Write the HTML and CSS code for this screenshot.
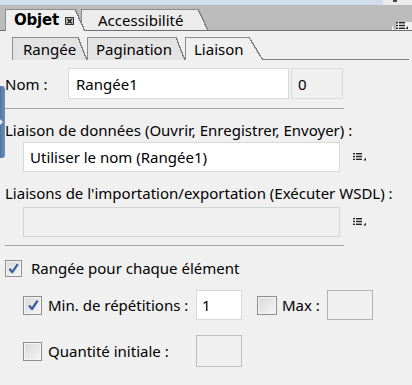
FILE: index.html
```html
<!DOCTYPE html>
<html lang="fr">
<head>
<meta charset="utf-8">
<title>Objet - Liaison</title>
<link rel="stylesheet" href="styles.css">
</head>
<body>
<div class="top-strip"><div class="top-blue"></div><div class="top-grip"></div></div>
<div class="tabbar">
  <div class="tab tab-active">
    <div class="tab-body objet-body"><span class="tab-title-bold">Objet</span><span class="close-box">×</span></div>
    <div class="tab-slant"></div>
  </div>
  <div class="tab tab-inactive">
    <div class="tab-body acc-body">Accessibilité</div>
    <div class="tab-slant"></div>
  </div>
  <div class="tabbar-fill"></div>
  <div class="panel-menu">
    <svg width="12" height="7" viewBox="0 0 12 7"><rect x="0" y="0" width="2" height="1.4" fill="#222"/><rect x="3" y="0" width="6" height="1.4" fill="#222"/><rect x="0" y="2.8" width="2" height="1.4" fill="#222"/><rect x="3" y="2.8" width="6" height="1.4" fill="#222"/><rect x="0" y="5.6" width="2" height="1.4" fill="#222"/><rect x="3" y="5.6" width="6" height="1.4" fill="#222"/><polygon points="12,4 12,7 9.5,7" fill="#222"/></svg>
  </div>
</div>
<div class="panel">
  <div class="subtabs">
    <div class="stab stab-inactive">
      <div class="stab-body rangee-body">Rangée</div>
      <div class="stab-slant"></div>
    </div>
    <div class="stab stab-inactive">
      <div class="stab-body pag-body">Pagination</div>
      <div class="stab-slant"></div>
    </div>
    <div class="stab stab-active">
      <div class="stab-body liaison-body">Liaison</div>
      <div class="stab-slant wide"></div>
    </div>
    <div class="subtabs-fill"></div>
  </div>

  <div class="row-nom">
    <span class="lbl-nom">Nom :</span>
    <div class="field field-nom">Rangée1</div>
    <div class="field field-count">0</div>
  </div>
  <div class="sep"></div>

  <div class="lbl-block lbl-first">Liaison de données (Ouvrir, Enregistrer, Envoyer) :</div>
  <div class="bind-row">
    <div class="field field-bind">Utiliser le nom (Rangée1)</div>
    <span class="list-icon"><svg width="14" height="8" viewBox="0 0 14 8"><rect x="0" y="0" width="2" height="1.4" fill="#222"/><rect x="3" y="0" width="6" height="1.4" fill="#222"/><rect x="0" y="2.8" width="2" height="1.4" fill="#222"/><rect x="3" y="2.8" width="6" height="1.4" fill="#222"/><rect x="0" y="5.6" width="2" height="1.4" fill="#222"/><rect x="3" y="5.6" width="6" height="1.4" fill="#222"/><polygon points="13,4.5 13,7.4 10.5,7.4" fill="#222"/></svg></span>
  </div>
  <div class="lbl-block lbl-second">Liaisons de l'importation/exportation (Exécuter WSDL) :</div>
  <div class="bind-row bind-row-2">
    <div class="field field-bind field-disabled"></div>
    <span class="list-icon"><svg width="14" height="8" viewBox="0 0 14 8"><rect x="0" y="0" width="2" height="1.4" fill="#222"/><rect x="3" y="0" width="6" height="1.4" fill="#222"/><rect x="0" y="2.8" width="2" height="1.4" fill="#222"/><rect x="3" y="2.8" width="6" height="1.4" fill="#222"/><rect x="0" y="5.6" width="2" height="1.4" fill="#222"/><rect x="3" y="5.6" width="6" height="1.4" fill="#222"/><polygon points="13,4.5 13,7.4 10.5,7.4" fill="#222"/></svg></span>
  </div>
  <div class="sep sep-2"></div>

  <div class="check-main">
    <span class="cb cb-small cb-checked"><svg width="13" height="13" viewBox="0 0 13 13"><path d="M2.5 6.8 L5.3 10.2 L10.8 2.2" fill="none" stroke="#3d5c9e" stroke-width="2.2" stroke-linejoin="round"/></svg></span>
    <span class="cb-label">Rangée pour chaque élément</span>
  </div>

  <div class="opt-row opt-row-1">
    <span class="cb cb-checked"><svg width="14" height="14" viewBox="0 0 14 14"><path d="M3 7.4 L6 11 L11.6 2.6" fill="none" stroke="#3d5c9e" stroke-width="2.3" stroke-linejoin="round"/></svg></span>
    <span class="opt-label">Min. de répétitions :</span>
    <div class="field field-small">1</div>
    <span class="cb cb-max"></span>
    <span class="opt-label opt-label-max">Max :</span>
    <div class="field field-small field-disabled field-dark"></div>
  </div>

  <div class="opt-row opt-row-2">
    <span class="cb"></span>
    <span class="opt-label">Quantité initiale :</span>
    <div class="field field-small field-disabled field-tall"></div>
  </div>
</div>
<div class="side-tab"><svg width="4" height="8" viewBox="0 0 4 8"><path d="M0 1 L3 4 L0 7 Z" fill="#e8eef5"/></svg></div>
</body>
</html>
```
FILE: styles.css
```css
html, body {
  margin: 0;
  padding: 0;
}
body {
  width: 412px;
  height: 385px;
  overflow: hidden;
  background: #f0f0f0;
  font-family: "Noto Sans", "Open Sans", sans-serif;
  font-size: 15px;
  color: #000;
  position: relative;
}

/* top strip */
.top-strip {
  display: flex;
  height: 5px;
  background: #ececec;
}
.top-blue {
  width: 383px;
  background: #d0dfeb;
}
.top-grip {
  width: 4px;
  height: 2px;
  margin-left: 10px;
  background: #444;
}

/* main tab bar */
.tabbar {
  display: flex;
  align-items: flex-end;
  height: 25px;
  padding-left: 5px;
  background: #bbbbbb;
  border-bottom: 1px solid #6e6e6e;
}
.tab {
  display: flex;
  height: 21px;
  position: relative;
}
.tab-active {
  z-index: 2;
  margin-bottom: -1px;
  height: 22px;
}
.tab-inactive {
  margin-left: -4px;
  z-index: 1;
}
.tab-body {
  display: flex;
  align-items: center;
  background: #f0f0f0;
  border-top: 1px solid #8c8c8c;
  border-left: 1px solid #8c8c8c;
}
.objet-body {
  width: 61px;
  padding-left: 8px;
  padding-bottom: 1px;
  box-sizing: content-box;
}
.acc-body {
  width: 100px;
  padding-left: 16px;
  background: #ececec;
}
.tab-title-bold {
  font-family: "DejaVu Sans", sans-serif;
  font-weight: bold;
  font-size: 15px;
  letter-spacing: -0.2px;
}
.close-box {
  flex: none;
  display: inline-flex;
  align-items: center;
  justify-content: center;
  width: 7px;
  height: 6px;
  margin-left: 6px;
  margin-top: 1px;
  border: 1px solid #333;
  background: #bdbdbd;
  font-size: 9px;
  line-height: 6px;
  font-weight: bold;
  font-family: "DejaVu Sans", sans-serif;
}
.tab-slant {
  width: 10px;
  background: linear-gradient(to top right, #f0f0f0 calc(50% - 0.8px), #7d7d7d calc(50% - 0.8px), #7d7d7d calc(50% + 0.5px), transparent calc(50% + 0.5px));
}
.tab-inactive .tab-slant {
  background: linear-gradient(to top right, #ececec calc(50% - 0.8px), #7d7d7d calc(50% - 0.8px), #7d7d7d calc(50% + 0.5px), transparent calc(50% + 0.5px));
}
.tabbar-fill {
  flex: 1;
}
.panel-menu {
  display: flex;
  align-items: center;
  justify-content: flex-end;
  width: 16px;
  height: 7px;
  padding: 0 4px 1px 0;
  background: linear-gradient(to top right, #f0f0f0 0 30%, transparent 30%) left / 4px 100% no-repeat, linear-gradient(#f0f0f0, #f0f0f0) 4px 0 / 100% 100% no-repeat;
}

/* panel */
.panel {
  padding: 6px 0 0 5px;
}
.subtabs {
  display: flex;
  height: 23px;
  padding-left: 7px;
}
.stab {
  display: flex;
  height: 23px;
}
.stab-body {
  display: flex;
  align-items: center;
  background: #e3e3e3;
  border-top: 1px solid #8c8c8c;
  border-left: 1px solid #8c8c8c;
  box-sizing: border-box;
}
.stab-active .stab-body {
  background: #f0f0f0;
}
.rangee-body {
  width: 66px;
  padding-left: 10px;
}
.pag-body {
  width: 89px;
  padding-left: 8px;
}
.liaison-body {
  width: 64px;
  padding-left: 8px;
}
.stab-slant {
  width: 9px;
  background: linear-gradient(to top right, #e3e3e3 calc(50% - 0.8px), #7d7d7d calc(50% - 0.8px), #7d7d7d calc(50% + 0.5px), transparent calc(50% + 0.5px));
}
.stab-slant.wide {
  width: 14px;
  background: linear-gradient(to top right, #f0f0f0 calc(50% - 0.8px), #7d7d7d calc(50% - 0.8px), #7d7d7d calc(50% + 0.5px), transparent calc(50% + 0.5px));
}
.subtabs-fill {
  flex: 1;
  margin-right: 3px;
  border-bottom: 1px solid #7d7d7d;
}

/* nom row */
.row-nom {
  display: flex;
  align-items: center;
  margin-top: 8px;
  height: 31px;
}
.lbl-nom {
  width: 63px;
}
.field {
  box-sizing: border-box;
  height: 31px;
  border: 1px solid #d9d9d9;
  background: #fff;
  display: flex;
  align-items: center;
  padding-left: 6px;
}
.field-nom {
  width: 221px;
  padding-left: 7px;
}
.field-count {
  width: 52px;
  margin-left: 2px;
  background: #f0f0f0;
  border-color: #dcdcdc;
}
.sep {
  width: 339px;
  height: 1px;
  background: #a4a4a4;
  margin-top: 9px;
}
.sep-2 {
  margin-top: 8px;
}

.lbl-block {
  height: 20px;
  line-height: 20px;
}
.lbl-first {
  margin-top: 11px;
}
.lbl-second {
  margin-top: 11px;
}
.bind-row {
  display: flex;
  align-items: center;
  margin-top: 2px;
  margin-left: 18px;
}
.bind-row-2 {
  margin-top: 4px;
}
.field-bind {
  width: 317px;
  height: 30px;
}
.field-disabled {
  background: #f0f0f0;
  border-color: #d4d4d4;
}
.list-icon {
  display: flex;
  margin-left: 13px;
  margin-top: -1px;
}

/* checkboxes */
.check-main {
  display: flex;
  align-items: center;
  margin-top: 13px;
  height: 18px;
}
.cb {
  box-sizing: border-box;
  width: 19px;
  height: 19px;
  border: 1px solid #8e8e8e;
  box-shadow: inset 0 0 0 1px #f4f4f4;
  background: linear-gradient(135deg, #d8d8d8, #f6f6f6);
  display: inline-flex;
  align-items: center;
  justify-content: center;
  flex: none;
}
.cb-small {
  width: 17px;
  height: 17px;
}
.cb-label {
  margin-left: 9px;
}
.opt-row {
  display: flex;
  align-items: center;
  margin-left: 18px;
  height: 30px;
}
.opt-row-1 {
  margin-top: 13px;
}
.opt-row-2 {
  margin-top: 15px;
  height: 32px;
}
.opt-label {
  width: 148px;
  margin-left: 6px;
}
.field-small {
  width: 46px;
  height: 30px;
  padding-left: 5px;
}
.field-tall {
  height: 32px;
  border-color: #bdbdbd;
}
.field-dark {
  border-color: #b4b4b4;
}
.cb-max {
  width: 20px;
  margin-left: 15px;
}
.opt-label-max {
  width: 45px;
  margin-left: 5px;
}

/* collapsed side tab on the left edge */
.side-tab {
  position: absolute;
  left: 0;
  top: 86px;
  width: 5px;
  height: 72px;
  border-radius: 0 3px 3px 0;
  background: linear-gradient(to right, #4f76a3, #6d90b8);
  display: flex;
  align-items: center;
  justify-content: flex-start;
}
```
